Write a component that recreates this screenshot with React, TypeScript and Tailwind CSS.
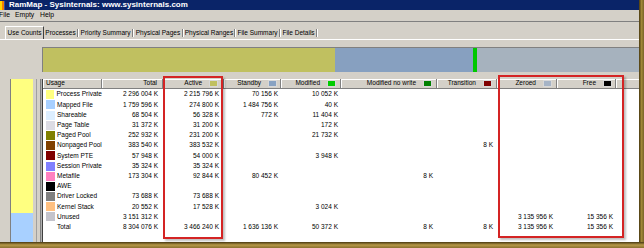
import React from "react";

type Col = { w: string; label?: string; sw?: string; pr: string; hpr: string };

const cols: Col[] = [
  { w: "w-[59px]", pr: "pl-[3px]", hpr: "pl-[3px]" },
  { w: "w-[61px]", label: "Total", pr: "pr-[5px]", hpr: "pr-[5px]" },
  { w: "w-[61px]", label: "Active", sw: "bg-[#c0c060]", pr: "pr-[5px]", hpr: "pr-[5px]" },
  { w: "w-[57px]", label: "Standby", sw: "bg-[#88a2c2]", pr: "pr-[3px]", hpr: "pr-[3px]" },
  { w: "w-[60px]", label: "Modified", sw: "bg-[#00cc00]", pr: "pr-[3px]", hpr: "pr-[4px]" },
  { w: "w-[96px]", label: "Modified no write", sw: "bg-[#008000]", pr: "pr-[4px]", hpr: "pr-[4px]" },
  { w: "w-[60px]", label: "Transition", sw: "bg-[#800000]", pr: "pr-[4px]", hpr: "pr-[4px]" },
  { w: "w-[60px]", label: "Zeroed", sw: "bg-[#a6b4c6]", pr: "pr-[4px]", hpr: "pr-[4px]" },
  { w: "w-[59px]", label: "Free", sw: "bg-[#000000]", pr: "pr-[3px]", hpr: "pr-[3px]" },
];

type Row = { name: string; sw?: string; v: string[] };

const rows: Row[] = [
  { name: "Process Private", sw: "bg-[#ffff80]", v: ["2 296 004 K", "2 215 796 K", "70 156 K", "10 052 K", "", "", "", ""] },
  { name: "Mapped File", sw: "bg-[#a8d0ff]", v: ["1 759 596 K", "274 800 K", "1 484 756 K", "40 K", "", "", "", ""] },
  { name: "Shareable", sw: "bg-[#dceeff]", v: ["68 504 K", "56 328 K", "772 K", "11 404 K", "", "", "", ""] },
  { name: "Page Table", sw: "bg-[#dcdce4]", v: ["31 372 K", "31 200 K", "", "172 K", "", "", "", ""] },
  { name: "Paged Pool", sw: "bg-[#808000]", v: ["252 932 K", "231 200 K", "", "21 732 K", "", "", "", ""] },
  { name: "Nonpaged Pool", sw: "bg-[#804000]", v: ["383 540 K", "383 532 K", "", "", "", "8 K", "", ""] },
  { name: "System PTE", sw: "bg-[#800000]", v: ["57 948 K", "54 000 K", "", "3 948 K", "", "", "", ""] },
  { name: "Session Private", sw: "bg-[#8080ff]", v: ["35 324 K", "35 324 K", "", "", "", "", "", ""] },
  { name: "Metafile", sw: "bg-[#ff80c0]", v: ["173 304 K", "92 844 K", "80 452 K", "", "8 K", "", "", ""] },
  { name: "AWE", sw: "bg-[#000000]", v: ["", "", "", "", "", "", "", ""] },
  { name: "Driver Locked", sw: "bg-[#808080]", v: ["73 688 K", "73 688 K", "", "", "", "", "", ""] },
  { name: "Kernel Stack", sw: "bg-[#ffc080]", v: ["20 552 K", "17 528 K", "", "3 024 K", "", "", "", ""] },
  { name: "Unused", sw: "bg-[#c4c4cc]", v: ["3 151 312 K", "", "", "", "", "", "3 135 956 K", "15 356 K"] },
  { name: "Total", v: ["8 304 076 K", "3 466 240 K", "1 636 136 K", "50 372 K", "8 K", "8 K", "3 135 956 K", "15 356 K"] },
];

const tabs = [
  { t: "Processes", w: "w-[35px]" },
  { t: "Priority Summary", w: "w-[55px]" },
  { t: "Physical Pages", w: "w-[50px]" },
  { t: "Physical Ranges", w: "w-[52px]" },
  { t: "File Summary", w: "w-[45px]" },
  { t: "File Details", w: "w-[37px]" },
];

export default function App() {
  return (
    <div className="relative w-[644px] h-[248px] overflow-hidden bg-[#d4d0c8] [font-family:'Liberation_Sans',Arial,sans-serif] text-[6.5px] leading-none text-black">
      <div className="flex h-[242px]">
        {/* window */}
        <div className="flex flex-col flex-1 min-w-0">
          {/* title bar */}
          <div className="flex items-center h-[10px] bg-[#0a2468]">
            <div className="flex h-[9px] w-[5px]">
              <span className="w-[2px] bg-[#ffd800]" />
              <span className="w-[2px] bg-[#f08000]" />
              <span className="w-[1px] bg-[#3050a0]" />
            </div>
            <span className="ml-[4px] text-white font-bold text-[8px]">RamMap - Sysinternals: www.sysinternals.com</span>
          </div>
          {/* menu */}
          <div className="flex items-center h-[12px] border-b border-[#808080] text-[6.8px]">
            <span className="w-[16px] -ml-[1px]">File</span>
            <span className="w-[25px]">Empty</span>
            <span>Help</span>
          </div>
          {/* tabs */}
          <div className="flex items-end h-[18px] pl-[5px] border-b border-white">
            <div className="flex items-center justify-center w-[39px] h-[13px] border-t border-l border-white border-r border-r-[#404040]">
              Use Counts
            </div>
            {tabs.map((tb) => (
              <div key={tb.t} className={`flex items-center h-[12px] ${tb.w}`}>
                <span className="flex-1 text-center whitespace-nowrap">{tb.t}</span>
                <span className="w-[2px] h-[8px] border-l border-[#808080] border-r border-r-white" />
              </div>
            ))}
          </div>
          {/* content */}
          <div className="flex flex-col flex-1 pt-[7px]">
            <div className="flex h-[25px] ml-[42px] border-t border-l border-[#808080]">
              <div className="w-[292px] bg-[#c0c060]" />
              <div className="w-[138px] bg-[#87a0c0]" />
              <div className="w-[4px] bg-[#00c800]" />
              <div className="flex-1 bg-[#a6b2be]" />
            </div>
            <div className="flex flex-1 mt-[7px]">
              {/* left usage bar */}
              <div className="w-[11px] border-r border-[#808080]" />
              <div className="flex flex-col w-[22px]">
                <div className="h-[134px] bg-[#ffff80]" />
                <div className="flex-1 bg-[#a8d0ff]" />
              </div>
              <div className="w-[3px]" />
              <div className="w-[1px] bg-[#a0a0a0]" />
              <div className="w-[3px]" />
              <div className="w-[3px] border-l border-[#808080] border-r border-r-[#404040] bg-[#b0b0b0]" />
              {/* list view */}
              <div className="flex flex-col flex-1 min-w-0 bg-white">
                <div className="flex h-[10px] bg-[#d4d0c8] border-b border-[#808080]">
                  {cols.map((c, i) => (
                    <div
                      key={i}
                      className={`flex items-center h-full ${c.w} ${c.hpr} ${i === 0 ? "justify-start" : "justify-end"} gap-[7px] border-r border-[#808080] shadow-[inset_1px_1px_0_#ffffff]`}
                    >
                      <span className="whitespace-nowrap">{i === 0 ? "Usage" : c.label}</span>
                      {c.sw && <span className={`w-[9px] h-[7px] ${c.sw} border border-[#d8d8d8]`} />}
                    </div>
                  ))}
                  <div className="flex-1 shadow-[inset_1px_1px_0_#ffffff]" />
                </div>
                <div className="flex flex-col pt-[0.6px]">
                  {rows.map((r) => (
                    <div key={r.name} className="flex h-[10.2px] items-center">
                      <div className={`flex items-center gap-[2px] ${cols[0].w} pl-[3px]`}>
                        {r.sw ? <span className={`w-[9px] h-[9px] ${r.sw}`} /> : <span className="w-[9px] h-[9px]" />}
                        <span className="whitespace-nowrap">{r.name}</span>
                      </div>
                      {r.v.map((v, j) => (
                        <div key={j} className={`${cols[j + 1].w} ${cols[j + 1].pr} text-right whitespace-nowrap`}>
                          {v}
                        </div>
                      ))}
                    </div>
                  ))}
                </div>
              </div>
            </div>
          </div>
        </div>
        {/* right frame */}
        <div className="w-[5px] bg-gradient-to-r from-[#4a3a10] via-[#a08838] to-[#7a6428]" />
      </div>
      <div className="h-[6px] bg-gradient-to-b from-[#4a3a12] via-[#b89a48] to-[#8a7030]" />

      {/* annotation boxes */}
      <div className="absolute left-[163px] top-[76px] w-[60px] h-[163px] border-2 border-[#d42424] shadow-[2px_2px_2px_rgba(0,0,0,0.25)]" />
      <div className="absolute left-[498px] top-[75px] w-[126px] h-[163px] border-2 border-[#d42424] shadow-[2px_2px_2px_rgba(0,0,0,0.25)]" />
    </div>
  );
}
